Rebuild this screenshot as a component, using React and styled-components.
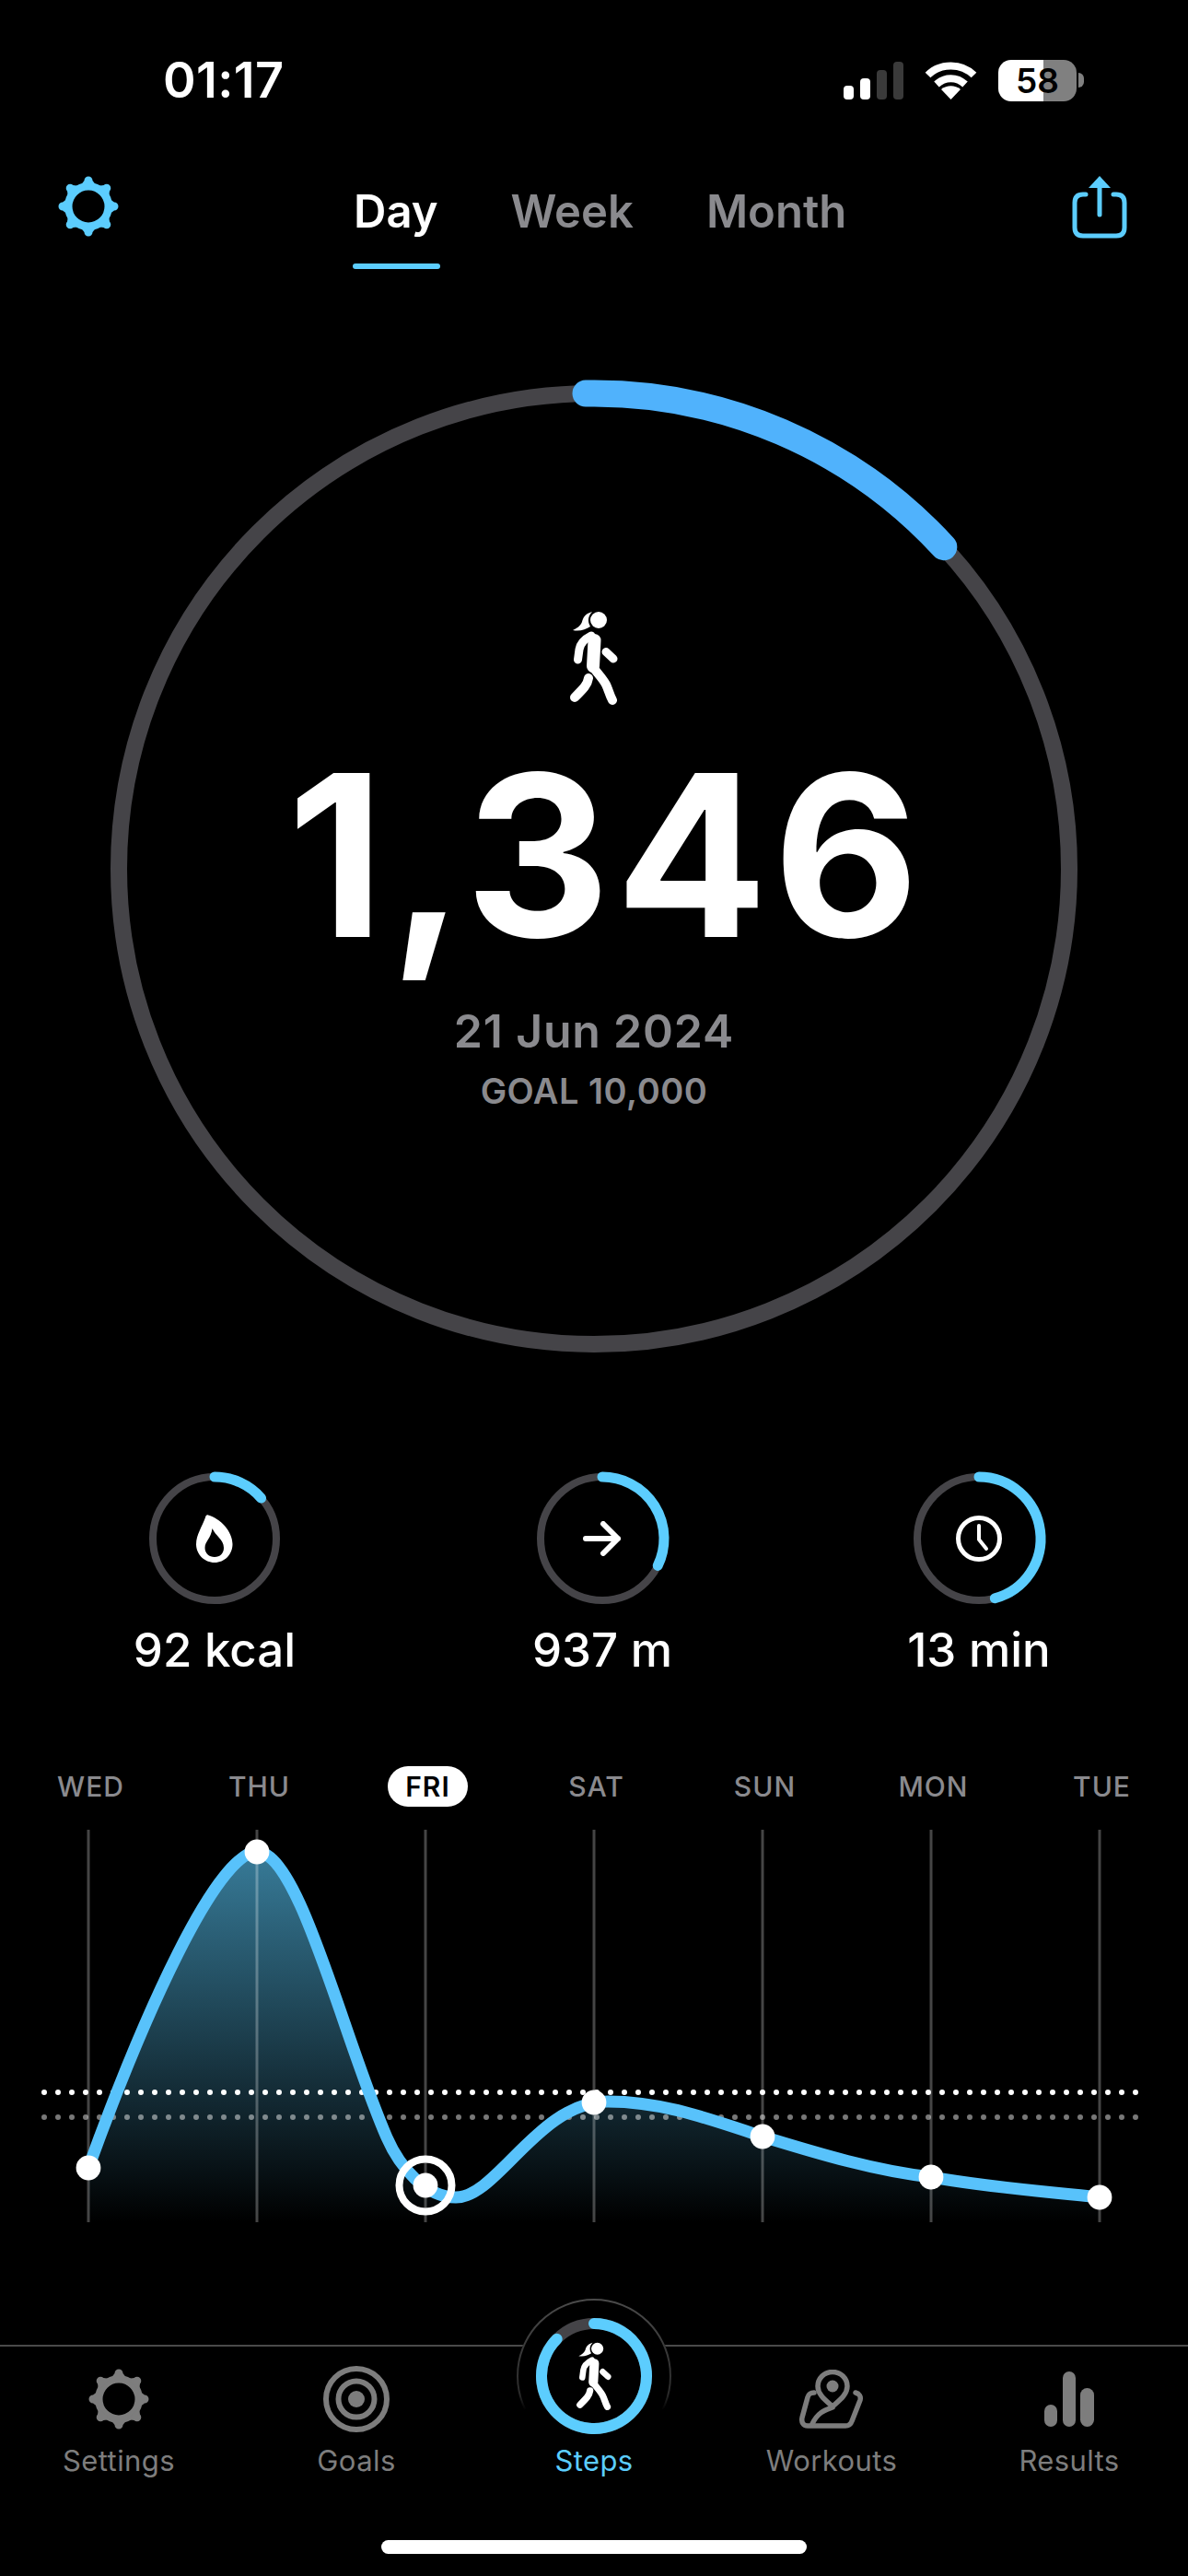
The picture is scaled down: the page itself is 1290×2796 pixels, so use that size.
import React from 'react';
import styled, { createGlobalStyle } from 'styled-components';

const BLUE = '#5ccdfe';
const RING_BLUE = '#50b2fc';
const TRACK = '#454448';
const MUTED = '#8a8a8e';
const TAB_GREY = '#7d7d7d';

const GlobalStyle = createGlobalStyle`
  html, body {
    margin: 0;
    padding: 0;
    background: #000;
  }
  body {
    font-family: Inter, "Liberation Sans", sans-serif;
    color: #fff;
  }
`;

const Page = styled.div`
  width: 1290px;
  height: 2796px;
  overflow: hidden;
  background: #000;
  display: flex;
  flex-direction: column;
`;

const StatusBar = styled.div`
  height: 174px;
  flex: none;
  display: flex;
  align-items: center;
  justify-content: space-between;
  padding: 0 121px 0 177px;
`;

const Time = styled.div`
  font-size: 54px;
  font-weight: 600;
  line-height: 60px;
  letter-spacing: 0.4px;
`;

const StatusIcons = styled.div`
  display: flex;
  align-items: center;
  gap: 23px;
`;

const Battery = styled.div`
  position: relative;
  width: 85px;
  height: 45px;
  border-radius: 14px;
  background: linear-gradient(90deg, #fff 0, #fff 49px, #808080 49px, #808080 100%);
  color: #000;
  font-size: 37px;
  font-weight: 600;
  line-height: 45px;
  text-align: center;

  &::after {
    content: '';
    position: absolute;
    top: 14px;
    right: -8px;
    width: 6px;
    height: 16px;
    background: #808080;
    border-radius: 0 8px 8px 0;
  }
`;

const NavBar = styled.div`
  height: 118px;
  flex: none;
  display: grid;
  grid-template-columns: 321px auto 1fr;
  padding: 17px 66px 0 63px;
  box-sizing: border-box;
  align-items: start;
`;

const ShareSlot = styled.div`
  justify-self: end;
`;

const Tabs = styled.div`
  display: flex;
  gap: 79px;
  padding-top: 10px;
`;

const Tab = styled.div`
  font-size: 49px;
  font-weight: 600;
  line-height: 58px;
  color: ${(props) => (props.$active ? '#fff' : MUTED)};
`;

const TabMark = styled.div`
  height: 6px;
  margin: 27px -2px 0 -1px;
  border-radius: 3px;
  background: ${BLUE};
`;

const RingWrap = styled.div`
  position: relative;
  width: 1050px;
  height: 1050px;
  flex: none;
  margin: 126px auto 0;
  display: flex;
  flex-direction: column;
  align-items: center;
  padding-top: 245px;
  box-sizing: border-box;
`;

const RingSvg = styled.svg`
  position: absolute;
  top: 0;
  left: 0;
  overflow: visible;
`;

const Count = styled.div`
  position: relative;
  margin-top: 42px;
  padding-left: 26px;
  font-size: 244px;
  font-weight: 700;
  line-height: 244px;
  letter-spacing: 6px;
`;

const DateLine = styled.div`
  position: relative;
  margin-top: 38px;
  font-size: 50px;
  font-weight: 600;
  line-height: 60px;
  letter-spacing: 0.8px;
  color: ${MUTED};
`;

const GoalLine = styled.div`
  position: relative;
  margin-top: 12px;
  font-size: 38px;
  font-weight: 600;
  line-height: 46px;
  letter-spacing: 0.5px;
  color: ${MUTED};
`;

const Stats = styled.div`
  flex: none;
  display: grid;
  grid-template-columns: 421px 409px 180px;
  padding-left: 143px;
  margin-top: 131px;
`;

const Stat = styled.div`
  width: 180px;
  display: flex;
  flex-direction: column;
  align-items: center;
`;

const MiniRing = styled.div`
  position: relative;
  width: 142px;
  height: 142px;
  display: flex;
  align-items: center;
  justify-content: center;
`;

const StatValue = styled.div`
  margin-top: 20px;
  font-size: 51px;
  font-weight: 500;
  line-height: 60px;
  white-space: nowrap;
`;

const Days = styled.div`
  flex: none;
  display: grid;
  grid-template-columns: repeat(7, 183px);
  padding-left: 7px;
  margin-top: 96px;
`;

const Day = styled.div`
  justify-self: center;
  height: 44px;
  padding: 0 ${(props) => (props.$active ? '19px' : '0')};
  border-radius: 22px;
  font-size: 30px;
  font-weight: ${(props) => (props.$active ? 600 : 500)};
  line-height: 44px;
  letter-spacing: 1px;
  background: ${(props) => (props.$active ? '#fff' : 'transparent')};
  color: ${(props) => (props.$active ? '#000' : MUTED)};
`;

const Chart = styled.svg`
  display: block;
  flex: none;
  margin-top: 25px;
`;

const BottomBar = styled.div`
  flex: none;
  margin-top: 125px;
  border-top: 2px solid #4a4a4a;
  display: grid;
  grid-template-columns: repeat(5, 258px);
`;

const BarItem = styled.div`
  position: relative;
  display: flex;
  flex-direction: column;
  align-items: center;
  padding-top: 21px;
`;

const BarIcon = styled.div`
  height: 72px;
  display: flex;
  align-items: center;
  justify-content: center;
`;

const BarLabel = styled.div`
  margin-top: 13px;
  font-size: 31px;
  line-height: 36px;
  letter-spacing: 0.4px;
  color: ${(props) => (props.$active ? BLUE : TAB_GREY)};
`;

const StepsBadge = styled.div`
  position: absolute;
  top: -52px;
  left: 50%;
  transform: translateX(-50%);
  width: 168px;
  height: 168px;
  border-radius: 50%;
  background: #000;
  display: flex;
  align-items: center;
  justify-content: center;
`;

const BadgeEdge = styled.svg`
  position: absolute;
  top: 0;
  left: 0;
`;

const BadgeRing = styled.div`
  position: absolute;
  top: 21px;
  left: 21px;
  width: 126px;
  height: 126px;
`;

const HomeBar = styled.div`
  flex: none;
  width: 462px;
  height: 15px;
  margin: 68px auto 0;
  border-radius: 8px;
  background: #fff;
`;

const polar = (c, r, deg) => {
  const a = ((deg - 90) * Math.PI) / 180;
  return [c + r * Math.cos(a), c + r * Math.sin(a)];
};

const arcPath = (c, r, from, to) => {
  const [sx, sy] = polar(c, r, from);
  const [ex, ey] = polar(c, r, to);
  return `M${sx} ${sy} A${r} ${r} 0 ${to - from > 180 ? 1 : 0} 1 ${ex} ${ey}`;
};

const Ring = ({ size, r, track, arc, from = 0, to, color }) => (
  <RingSvg width={size} height={size} viewBox={`0 0 ${size} ${size}`}>
    <circle cx={size / 2} cy={size / 2} r={r} fill="none" stroke={TRACK} strokeWidth={track} />
    <path d={arcPath(size / 2, r, from, to)} fill="none" stroke={color} strokeWidth={arc} strokeLinecap="round" />
  </RingSvg>
);

const Walker = ({ width, height }) => (
  <svg width={width} height={height} viewBox="0 0 52 102" style={{ position: 'relative', display: 'block' }}>
    <circle cx="31" cy="10" r="9" fill="#fff" />
    <path d="M24 1C16 3 14 8 13 12C11 17 7 19 3 21C10 22.5 17 20.5 22 17C19 12 19 6 24 1Z" fill="#fff" />
    <g fill="none" stroke="#fff" strokeLinecap="round" strokeLinejoin="round">
      <path d="M26.5 32L25 60" strokeWidth="14" />
      <path d="M23 27C15 31 11 35 10 42L8.5 53" strokeWidth="9" />
      <path d="M39 44.5L47 52" strokeWidth="9" />
      <path d="M24 60C30 68 36 74 39 80C42 86 43 92 46 97" strokeWidth="10" />
      <path d="M20 73C19 80 15 84 5 94" strokeWidth="10" />
    </g>
  </svg>
);

const Gear = ({ color }) => (
  <svg width="66" height="66" viewBox="0 0 66 66" style={{ display: 'block' }}>
    <circle cx="33" cy="33" r="21.75" fill="none" stroke={color} strokeWidth="8.5" />
    {[0, 45, 90, 135, 180, 225, 270, 315].map((deg) => (
      <path
        key={deg}
        d="M-9 -22L-4.5 -28A4.5 4.5 0 0 1 4.5 -28L9 -22Z"
        fill={color}
        transform={`translate(33 33) rotate(${deg})`}
      />
    ))}
  </svg>
);

const ShareIcon = () => (
  <svg width="60" height="68" viewBox="0 0 60 68" style={{ display: 'block' }}>
    <path
      d="M15 20H12C6 20 3 23 3 29V56C3 62 6 65 12 65H48C54 65 57 62 57 56V29C57 23 54 20 48 20H45"
      fill="none"
      stroke={BLUE}
      strokeWidth="5"
      strokeLinecap="round"
    />
    <path d="M30 42V6" stroke={BLUE} strokeWidth="5" strokeLinecap="round" />
    <path d="M30 0L42 13H18Z" fill={BLUE} />
  </svg>
);

const SignalIcon = () => (
  <svg width="65" height="41" viewBox="0 0 65 41" style={{ display: 'block' }}>
    <rect x="0" y="26" width="11" height="15" rx="4" fill="#fff" />
    <rect x="18" y="18" width="11" height="23" rx="4" fill="#fff" />
    <rect x="36" y="9" width="11" height="32" rx="4" fill="#3a3a3a" />
    <rect x="54" y="0" width="11" height="41" rx="4" fill="#3a3a3a" />
  </svg>
);

const WifiIcon = () => (
  <svg width="57" height="41" viewBox="0 0 57 41" style={{ display: 'block' }}>
    <path d="M3.5 14.5C17 1 40 1 53.5 14.5" fill="none" stroke="#fff" strokeWidth="8" />
    <path d="M13 24.5C22 16 35 16 44 24.5" fill="none" stroke="#fff" strokeWidth="8" />
    <path d="M28.5 41L18 30C24 25 33 25 39 30Z" fill="#fff" />
  </svg>
);

const DropIcon = () => (
  <svg width="40" height="52" viewBox="0 0 40 52" style={{ position: 'relative', display: 'block' }}>
    <path
      fillRule="evenodd"
      fill="#fff"
      d="M13 0.5C26 4 39.5 18 39.5 32C39.5 43 31 52 20 52C9 52 0 43 0 32C0 22 6 14 10 3C10.5 1 11.5 0 13 0.5ZM17.5 15C21 23 30 27 30 36C30 42 26 46 20 46C14 46 9.5 42 9.5 36C9.5 29 16 26 17.5 15Z"
    />
  </svg>
);

const ArrowIcon = () => (
  <svg width="42" height="38" viewBox="0 0 42 38" style={{ position: 'relative', display: 'block' }}>
    <path d="M3 19H38M22 3L38 19L22 35" fill="none" stroke="#fff" strokeWidth="6" strokeLinecap="round" strokeLinejoin="round" />
  </svg>
);

const ClockIcon = () => (
  <svg width="50" height="50" viewBox="0 0 50 50" style={{ position: 'relative', display: 'block' }}>
    <circle cx="25" cy="25" r="22.5" fill="none" stroke="#fff" strokeWidth="5" />
    <path d="M25 11V26L33 36" fill="none" stroke="#fff" strokeWidth="4" strokeLinecap="round" strokeLinejoin="round" />
  </svg>
);

const TargetIcon = () => (
  <svg width="72" height="72" viewBox="0 0 72 72" style={{ display: 'block' }}>
    <circle cx="36" cy="36" r="33" fill="none" stroke={TAB_GREY} strokeWidth="6" />
    <circle cx="36" cy="36" r="19.5" fill="none" stroke={TAB_GREY} strokeWidth="6" />
    <circle cx="36" cy="36" r="9" fill={TAB_GREY} />
  </svg>
);

const WorkoutsIcon = () => (
  <svg width="70" height="64" viewBox="0 0 70 64" style={{ display: 'block' }}>
    <g fill="none" stroke={TAB_GREY} strokeWidth="5.5" strokeLinecap="round" strokeLinejoin="round">
      <path d="M16 25C11 25 10 27 9 30L3 52C2 57 4 61 9 61H50C54 61 56 59 57 56L66 33C67 29 65 26 61 25" />
      <path d="M36 40C28 33 20 27 20 18A16 15.5 0 0 1 52 18C52 27 44 33 36 40Z" />
      <path d="M36 41C28 44 20 46 14 59" />
    </g>
    <circle cx="36" cy="18" r="6.5" fill={TAB_GREY} />
  </svg>
);

const ResultsIcon = () => (
  <svg width="54" height="60" viewBox="0 0 54 60" style={{ display: 'block' }}>
    <rect x="0" y="36" width="14" height="24" rx="7" fill={TAB_GREY} />
    <rect x="20" y="0" width="14" height="60" rx="7" fill={TAB_GREY} />
    <rect x="39" y="18" width="15" height="42" rx="7.5" fill={TAB_GREY} />
  </svg>
);

const days = ['WED', 'THU', 'FRI', 'SAT', 'SUN', 'MON', 'TUE'];
const points = [
  [96, 2353],
  [279, 2010],
  [462, 2372],
  [645, 2282],
  [828, 2319],
  [1011, 2363],
  [1194, 2385],
];
const curve =
  'M96 2353C155 2190 235 2010 279 2010C325 2010 372 2210 420 2320C434 2352 462 2385 495 2385C540 2385 585 2281 660 2281C720 2281 770 2300 828 2319C890 2338 950 2356 1011 2363C1080 2375 1130 2378 1194 2385';

const WeekChart = () => (
  <Chart width="1290" height="434" viewBox="0 1986 1290 434">
    <defs>
      <linearGradient id="areaFill" x1="0" y1="2010" x2="0" y2="2412" gradientUnits="userSpaceOnUse">
        <stop offset="0" stopColor={BLUE} stopOpacity="0.6" />
        <stop offset="1" stopColor={BLUE} stopOpacity="0" />
      </linearGradient>
    </defs>
    <path d={`${curve}L1194 2412L96 2412Z`} fill="url(#areaFill)" />
    {points.map(([x]) => (
      <line key={x} x1={x} y1="1986" x2={x} y2="2412" stroke="#fff" strokeOpacity="0.27" strokeWidth="3" />
    ))}
    <line x1="48" y1="2271" x2="1234" y2="2271" stroke="#fff" strokeWidth="6" strokeLinecap="round" strokeDasharray="0 15" />
    <line x1="48" y1="2298" x2="1234" y2="2298" stroke="#fff" strokeOpacity="0.47" strokeWidth="6" strokeLinecap="round" strokeDasharray="0 15" />
    <path d={curve} fill="none" stroke="#58c2fb" strokeWidth="13" strokeLinecap="round" />
    {points.map(([x, y]) => (
      <circle key={x} cx={x} cy={y} r="13.4" fill="#fff" />
    ))}
    <circle cx="462" cy="2372" r="28.5" fill="none" stroke="#fff" strokeWidth="8" />
  </Chart>
);

const App = () => {
  return (
    <Page>
      <GlobalStyle />
      <StatusBar>
        <Time>01:17</Time>
        <StatusIcons>
          <SignalIcon />
          <WifiIcon />
          <Battery>58</Battery>
        </StatusIcons>
      </StatusBar>

      <NavBar>
        <Gear color={BLUE} />
        <Tabs>
          <Tab $active>
            Day
            <TabMark />
          </Tab>
          <Tab>Week</Tab>
          <Tab>Month</Tab>
        </Tabs>
        <ShareSlot>
          <ShareIcon />
        </ShareSlot>
      </NavBar>

      <RingWrap>
        <Ring size={1050} r={516} track={18} arc={29} from={-1} to={47.4} color={RING_BLUE} />
        <Walker width={52} height={102} />
        <Count>1,346</Count>
        <DateLine>21 Jun 2024</DateLine>
        <GoalLine>GOAL 10,000</GoalLine>
      </RingWrap>

      <Stats>
        <Stat>
          <MiniRing>
            <Ring size={142} r={67} track={8} arc={11} to={49} color={BLUE} />
            <DropIcon />
          </MiniRing>
          <StatValue>92 kcal</StatValue>
        </Stat>
        <Stat>
          <MiniRing>
            <Ring size={142} r={67} track={8} arc={11} to={116} color={BLUE} />
            <ArrowIcon />
          </MiniRing>
          <StatValue>937 m</StatValue>
        </Stat>
        <Stat>
          <MiniRing>
            <Ring size={142} r={67} track={8} arc={11} to={165} color={BLUE} />
            <ClockIcon />
          </MiniRing>
          <StatValue>13 min</StatValue>
        </Stat>
      </Stats>

      <Days>
        {days.map((day) => (
          <Day key={day} $active={day === 'FRI'}>
            {day}
          </Day>
        ))}
      </Days>

      <WeekChart />

      <BottomBar>
        <BarItem>
          <BarIcon>
            <Gear color={TAB_GREY} />
          </BarIcon>
          <BarLabel>Settings</BarLabel>
        </BarItem>
        <BarItem>
          <BarIcon>
            <TargetIcon />
          </BarIcon>
          <BarLabel>Goals</BarLabel>
        </BarItem>
        <BarItem>
          <StepsBadge>
            <BadgeEdge width="168" height="168" viewBox="0 0 168 168">
              <defs>
                <linearGradient id="badgeEdge" x1="0" y1="0" x2="0" y2="1">
                  <stop offset="0" stopColor="#4a4a4a" />
                  <stop offset="0.62" stopColor="#2a2a2a" />
                  <stop offset="0.72" stopColor="#000" />
                </linearGradient>
              </defs>
              <circle cx="84" cy="84" r="83" fill="none" stroke="url(#badgeEdge)" strokeWidth="2" />
            </BadgeEdge>
            <BadgeRing>
              <Ring size={126} r={57} track={12} arc={12} to={315} color={BLUE} />
            </BadgeRing>
            <Walker width={40} height={74} />
          </StepsBadge>
          <BarIcon />
          <BarLabel $active>Steps</BarLabel>
        </BarItem>
        <BarItem>
          <BarIcon>
            <WorkoutsIcon />
          </BarIcon>
          <BarLabel>Workouts</BarLabel>
        </BarItem>
        <BarItem>
          <BarIcon>
            <ResultsIcon />
          </BarIcon>
          <BarLabel>Results</BarLabel>
        </BarItem>
      </BottomBar>

      <HomeBar />
    </Page>
  );
};

export default App;
